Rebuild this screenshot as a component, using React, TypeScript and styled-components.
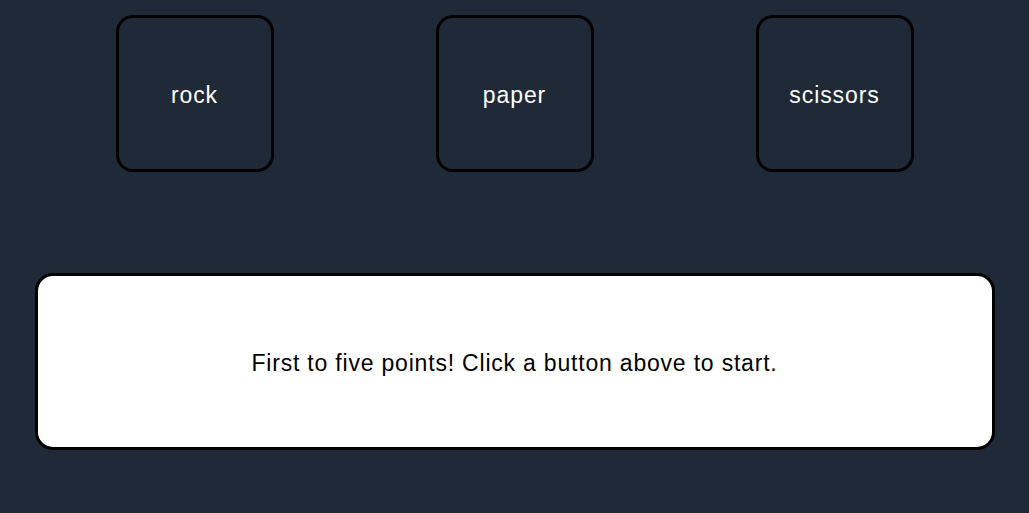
import React from "react";
import styled, { createGlobalStyle } from "styled-components";

const Global = createGlobalStyle`
  html, body { margin: 0; padding: 0; background: #1f2937; }
  body { font-family: "Liberation Sans", Arial, Helvetica, sans-serif; }
`;

const Page = styled.main`
  width: 960px;
  margin: 0 auto;
  padding-top: 15px;
  display: flex;
  flex-direction: column;
  align-items: stretch;
  gap: 101px;
`;

const Choices = styled.div`
  display: grid;
  grid-template-columns: repeat(3, 1fr);
  justify-items: center;
`;

const ChoiceButton = styled.button`
  width: 158px;
  height: 157px;
  box-sizing: border-box;
  border: 3px solid #000;
  border-radius: 17px;
  background: transparent;
  color: #fff;
  font-family: "Liberation Sans", Arial, Helvetica, sans-serif;
  font-size: 23px;
  letter-spacing: 0.9px;
  cursor: pointer;
  padding: 3px 0 0;
`;

const Message = styled.div`
  box-sizing: border-box;
  height: 177px;
  border: 3px solid #000;
  border-radius: 18px;
  background: #fff;
  color: #000;
  display: flex;
  align-items: center;
  justify-content: center;
  padding-top: 3px;
  font-size: 23px;
  letter-spacing: 0.8px;
`;

export default function App() {
  return (
    <>
      <Global />
      <Page>
        <Choices>
          {["rock", "paper", "scissors"].map((c) => (
            <ChoiceButton key={c}>{c}</ChoiceButton>
          ))}
        </Choices>
        <Message>First to five points! Click a button above to start.</Message>
      </Page>
    </>
  );
}
